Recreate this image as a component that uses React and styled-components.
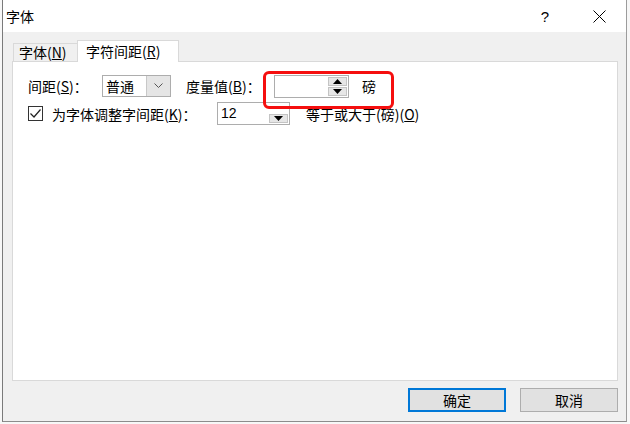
import React from "react";
import styled, { createGlobalStyle } from "styled-components";

const GlobalStyle = createGlobalStyle`
  body {
    margin: 0;
    background: #f7f7f7;
    font-family: "Noto Sans CJK SC", "Liberation Sans", sans-serif;
    color: #000;
  }
`;

const Window = styled.div`
  margin-left: 2px;
  width: 623px;
  height: 421px;
  background: #f0f0f0;
  border-left: 1px solid #7a7a7a;
  border-right: 1px solid #9c9c9c;
  border-bottom: 1px solid #8c8c8c;
  display: flex;
  flex-direction: column;
`;

const TitleBar = styled.div`
  height: 32px;
  background: #fff;
  display: flex;
  align-items: center;
  padding-left: 3px;
`;

const Title = styled.div`
  flex: 1;
  font-size: 14px;
`;

const TitleButton = styled.div`
  width: 54px;
  height: 32px;
  display: flex;
  align-items: center;
  justify-content: center;
  font-family: "Liberation Sans", sans-serif;
  font-size: 15px;
`;

const Body = styled.div`
  padding: 8px 8px 0 9px;
  display: flex;
  flex-direction: column;
`;

const Tabs = styled.div`
  display: flex;
  align-items: flex-end;
  padding-left: 1px;
  height: 21px;
`;

const Tab = styled.div`
  position: relative;
  z-index: ${(p) => (p.$active ? 2 : 1)};
  width: ${(p) => p.$width}px;
  height: ${(p) => (p.$active ? 22 : 18)}px;
  margin-bottom: ${(p) => (p.$active ? -1 : 0)}px;
  box-sizing: border-box;
  background: ${(p) => (p.$active ? "#fff" : "#f0f0f0")};
  border: 1px solid #d9d9d9;
  border-bottom: none;
  margin-left: ${(p) => (p.$active ? -1 : 0)}px;
  font-size: 14px;
  line-height: ${(p) => (p.$active ? 20 : 17)}px;
  padding-left: ${(p) => (p.$active ? 8 : 5)}px;
  white-space: nowrap;
`;

const Panel = styled.div`
  position: relative;
  height: 320px;
  box-sizing: border-box;
  background: #fff;
  border: 1px solid #d9d9d9;
  padding: 13px 0 0 15px;
  display: flex;
  flex-direction: column;
  gap: 5px;
`;

const Row = styled.div`
  display: flex;
  align-items: center;
  height: ${(p) => p.$h || 23}px;
  font-size: 14px;
  white-space: nowrap;
`;

const Label = styled.span`
  width: ${(p) => p.$width}px;
  flex: none;
`;

const Select = styled.div`
  width: 69px;
  height: 22px;
  box-sizing: border-box;
  border: 1px solid #adadad;
  display: flex;
  margin-right: 15px;
`;

const SelectText = styled.div`
  flex: 1;
  padding-left: 3px;
  line-height: 20px;
`;

const DropButton = styled.div`
  width: 23px;
  background: #e5e5e5;
  border-left: 1px solid #c8c8c8;
  display: flex;
  align-items: center;
  justify-content: center;
`;

const SpinBox = styled.div`
  width: ${(p) => p.$width}px;
  height: 23px;
  box-sizing: border-box;
  border: 1px solid #adadad;
  display: flex;
  margin-right: ${(p) => p.$mr}px;
`;

const SpinText = styled.div`
  flex: 1;
  padding-left: 3px;
  line-height: 21px;
  font-family: "Liberation Sans", sans-serif;
  font-size: 14px;
`;

const SpinButtons = styled.div`
  width: 19px;
  display: flex;
  flex-direction: column;
  padding: 1px;
  gap: 1px;
`;

const SpinHalf = styled.div`
  flex: 1;
  background: #e6e6e6;
  border: 1px solid #c4c4c4;
  display: flex;
  align-items: center;
  justify-content: center;
  visibility: ${(p) => (p.$hidden ? "hidden" : "visible")};
`;

const Check = styled.div`
  width: 15px;
  height: 15px;
  box-sizing: border-box;
  border: 1px solid #333;
  margin: 0 9px 0 0;
  display: flex;
  align-items: center;
  justify-content: center;
  background: #fff;
`;

const Highlight = styled.div`
  position: absolute;
  left: 250px;
  top: 9px;
  width: 131px;
  height: 38px;
  box-sizing: border-box;
  border: 3.5px solid #f50f0f;
  border-radius: 6px;
`;

const Footer = styled.div`
  display: flex;
  justify-content: flex-end;
  gap: 14px;
  padding-top: 7px;
`;

const Button = styled.button`
  width: 98px;
  height: 24px;
  box-sizing: border-box;
  background: #e1e1e1;
  border: ${(p) => (p.$default ? "2px solid #0078d7" : "1px solid #adadad")};
  font-family: "Noto Sans CJK SC", sans-serif;
  font-size: 14px;
  padding: 0;
  color: #000;
`;

const Up = () => (
  <svg width="9" height="5" viewBox="0 0 9 5">
    <path d="M0 5 L4.5 0 L9 5 Z" fill="#000" />
  </svg>
);

const Down = () => (
  <svg width="9" height="5" viewBox="0 0 9 5">
    <path d="M0 0 L4.5 5 L9 0 Z" fill="#000" />
  </svg>
);

export default function App() {
  return (
    <>
      <GlobalStyle />
      <Window>
        <TitleBar>
          <Title>字体</Title>
          <TitleButton>?</TitleButton>
          <TitleButton>
            <svg width="13" height="13" viewBox="0 0 13 13">
              <path d="M0.5 0.5 L12.5 12.5 M12.5 0.5 L0.5 12.5" stroke="#000" strokeWidth="1" />
            </svg>
          </TitleButton>
        </TitleBar>
        <Body>
          <Tabs>
            <Tab $width={65}>
              字体(<u>N</u>)
            </Tab>
            <Tab $active $width={102}>
              字符间距(<u>R</u>)
            </Tab>
          </Tabs>
          <Panel>
            <Row $h={22}>
              <Label $width={74}>
                间距(<u>S</u>)：
              </Label>
              <Select>
                <SelectText>普通</SelectText>
                <DropButton>
                  <svg width="9" height="6" viewBox="0 0 9 6">
                    <path d="M0.5 0.5 L4.5 4.5 L8.5 0.5" stroke="#555" fill="none" />
                  </svg>
                </DropButton>
              </Select>
              <Label $width={88}>
                度量值(<u>B</u>)：
              </Label>
              <SpinBox $width={75} $mr={13}>
                <SpinText />
                <SpinButtons>
                  <SpinHalf>
                    <Up />
                  </SpinHalf>
                  <SpinHalf>
                    <Down />
                  </SpinHalf>
                </SpinButtons>
              </SpinBox>
              <span>磅</span>
            </Row>
            <Row>
              <Check>
                <svg width="11" height="9" viewBox="0 0 11 9">
                  <path d="M0.5 4.5 L4 8 L10.5 0.5" stroke="#222" fill="none" strokeWidth="1.2" />
                </svg>
              </Check>
              <Label $width={165}>
                为字体调整字间距(<u>K</u>)：
              </Label>
              <SpinBox $width={73} $mr={16}>
                <SpinText>12</SpinText>
                <SpinButtons>
                  <SpinHalf $hidden />
                  <SpinHalf>
                    <Down />
                  </SpinHalf>
                </SpinButtons>
              </SpinBox>
              <span>
                等于或大于(磅)(<u>O</u>)
              </span>
            </Row>
            <Highlight />
          </Panel>
          <Footer>
            <Button $default>确定</Button>
            <Button>取消</Button>
          </Footer>
        </Body>
      </Window>
    </>
  );
}
